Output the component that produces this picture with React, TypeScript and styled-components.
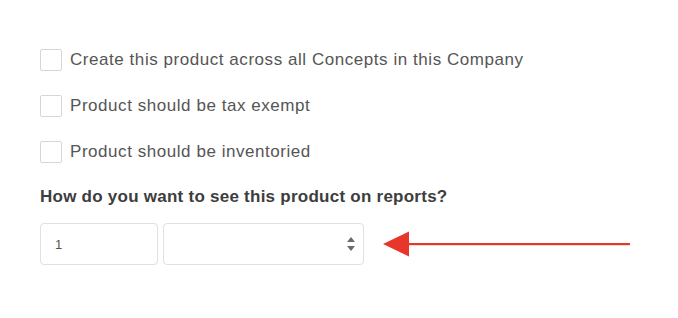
import React from "react";
import styled, { createGlobalStyle } from "styled-components";

const GlobalStyle = createGlobalStyle`
    html, body {
        margin: 0;
        padding: 0;
        background: #ffffff;
    }
    body {
        font-family: "Helvetica Neue", "Liberation Sans", Arial, sans-serif;
    }
`;

const options = [
    "Create this product across all Concepts in this Company",
    "Product should be tax exempt",
    "Product should be inventoried",
];

const App = () => {
    return <Page>
        <GlobalStyle />
        <CheckList>
            {options.map((label) => (
                <CheckRow key={label}>
                    <Box />
                    <Label>{label}</Label>
                </CheckRow>
            ))}
        </CheckList>
        <Heading>How do you want to see this product on reports?</Heading>
        <FieldRow>
            <QtyInput>1</QtyInput>
            <Select>
                <svg width="8" height="14" viewBox="0 0 8 14">
                    <path d="M4 0 L8 5 L0 5 Z" fill="#6b6b6b" />
                    <path d="M4 14 L8 9 L0 9 Z" fill="#6b6b6b" />
                </svg>
            </Select>
            <Arrow>
                <svg width="250" height="26" viewBox="0 0 250 26">
                    <path d="M0 13 L26 0.5 L26 25.5 Z" fill="#e8362a" />
                    <rect x="24" y="12" width="223" height="2.2" fill="#e8362a" />
                </svg>
            </Arrow>
        </FieldRow>
    </Page>
}

const Page = styled.div`
    width: 678px;
    height: 318px;
    box-sizing: border-box;
    padding: 48px 0 0 40px;
`

const CheckList = styled.div`
    display: flex;
    flex-direction: column;
    gap: 23px;
`

const CheckRow = styled.div`
    display: flex;
    align-items: center;
    gap: 8px;
    height: 23px;
`

const Box = styled.div`
    width: 22px;
    height: 22px;
    border: 1px solid #d6d6d6;
    border-radius: 2px;
    box-sizing: border-box;
    background: #fff;
`

const Label = styled.span`
    font-size: 17px;
    letter-spacing: 0.55px;
    color: #555555;
`

const Heading = styled.div`
    margin-top: 24px;
    font-size: 17px;
    letter-spacing: 0.25px;
    font-weight: bold;
    color: #3d3d3d;
`

const FieldRow = styled.div`
    display: flex;
    align-items: center;
    gap: 5px;
    margin-top: 16px;
`

const QtyInput = styled.div`
    width: 118px;
    height: 42px;
    box-sizing: border-box;
    border: 1px solid #e1e1e1;
    border-radius: 4px;
    padding-left: 14px;
    display: flex;
    align-items: center;
    font-size: 13px;
    color: #555;
`

const Select = styled.div`
    width: 201px;
    height: 42px;
    box-sizing: border-box;
    border: 1px solid #e1e1e1;
    border-radius: 4px;
    display: flex;
    align-items: center;
    justify-content: flex-end;
    padding-right: 8px;
`

const Arrow = styled.div`
    display: flex;
    margin-left: 14px;
`

export default App;
